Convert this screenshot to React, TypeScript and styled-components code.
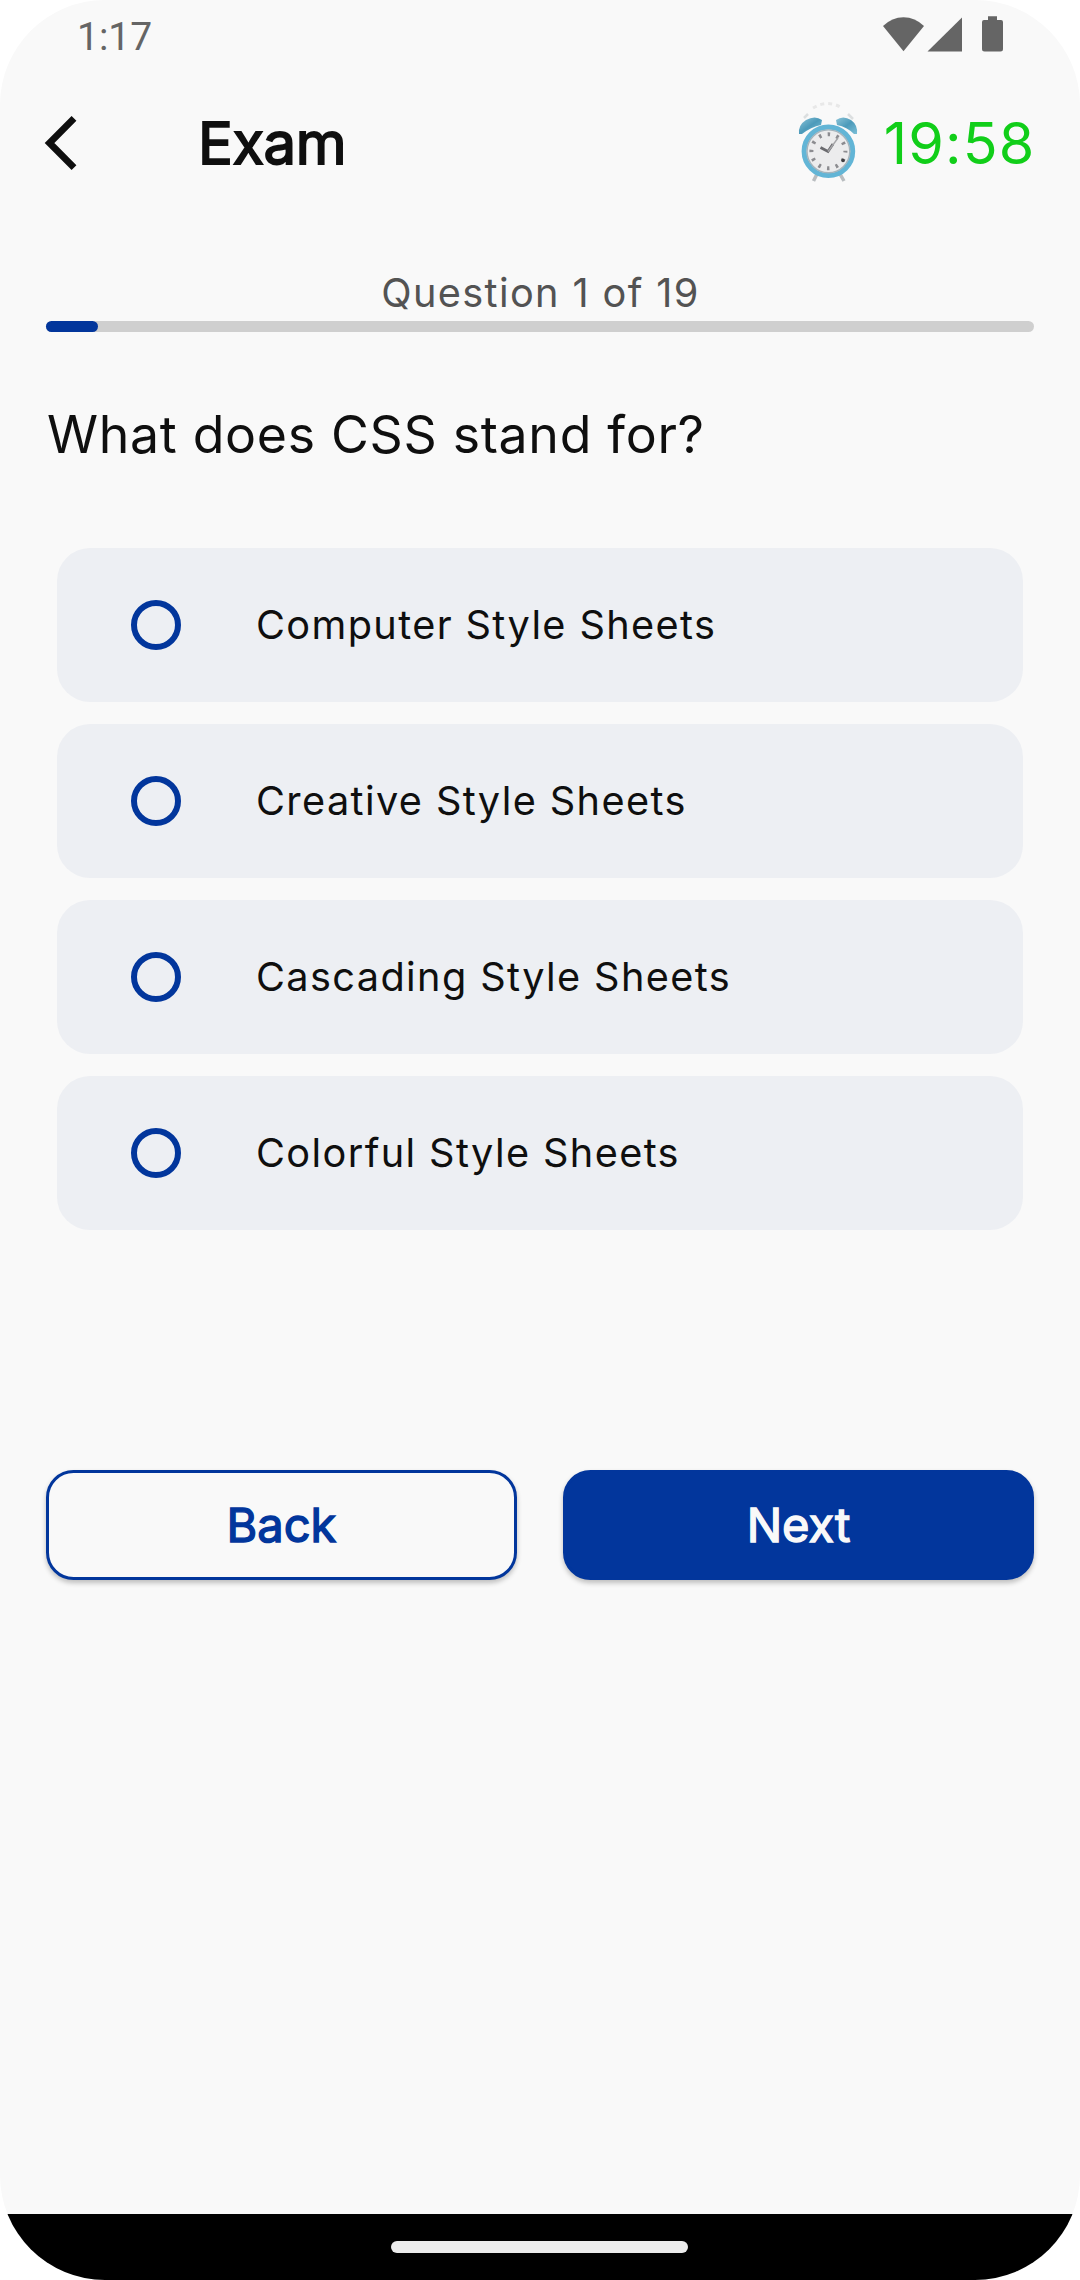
import React from 'react';
import styled, { createGlobalStyle } from 'styled-components';

const GlobalStyle = createGlobalStyle`
  * { box-sizing: border-box; }
  body { margin: 0; background: #ffffff; }
`;

const Screen = styled.div`
  display: flex;
  flex-direction: column;
  width: 1080px;
  height: 2280px;
  overflow: hidden;
  border-radius: 105px;
  background: #f9f9f9;
  color: #0f0f0f;
  font-family: Inter, Roboto, sans-serif;
`;

const StatusBar = styled.div`
  display: flex;
  align-items: center;
  justify-content: space-between;
  height: 66px;
  padding: 6px 77px 0;
  color: #656565;
`;

const Time = styled.span`
  margin-top: 3px;
  font: 400 39px/1 Roboto, sans-serif;
`;

const StatusIcons = styled.svg`
  width: 120px;
  height: 36px;
  margin-top: -4px;
  fill: currentColor;
`;

const AppBar = styled.header`
  display: flex;
  align-items: center;
  height: 154px;
  padding: 0 44.5px 0 43.5px;
`;

const BackIcon = styled.svg`
  width: 34px;
  height: 56px;
  fill: none;
  stroke: #0f0f0f;
  stroke-width: 6.8;
`;

const Title = styled.h1`
  flex: 1;
  margin: 0 0 0 120.5px;
  font-size: 58px;
  font-weight: 400;
  line-height: 1;
  letter-spacing: -0.45px;
  -webkit-text-stroke: 1.8px currentColor;
`;

const Timer = styled.div`
  display: flex;
  align-items: center;
  gap: 23px;
  color: #11ce19;
`;

const Remaining = styled.span`
  margin-top: 2px;
  font-size: 57.4px;
  line-height: 1;
  letter-spacing: 1.2px;
`;

const Clock = styled.svg`
  width: 66px;
  height: 88px;
  margin-top: 1px;
  filter: blur(0.6px);
`;

const Content = styled.main`
  display: flex;
  flex: 1;
  flex-direction: column;
  padding: 46px 46px 0;
`;

const Counter = styled.div`
  height: 55px;
  padding-left: 1px;
  text-align: center;
  color: #535353;
  font-size: 39.7px;
  line-height: 55px;
  letter-spacing: 1.375px;
`;

const Track = styled.div`
  height: 11px;
  border-radius: 6px;
  background: #cfcfcf;
`;

const Fill = styled.div`
  width: 52px;
  height: 11px;
  border-radius: 6px;
  background: #02369c;
`;

const Question = styled.h2`
  margin: 67px 0 79px;
  padding-left: 1px;
  height: 70px;
  font-size: 51.8px;
  font-weight: 400;
  line-height: 70px;
  letter-spacing: 0.69px;
`;

const Options = styled.div`
  display: flex;
  flex-direction: column;
  gap: 22px;
  padding: 0 11px;
`;

const Option = styled.label`
  display: flex;
  align-items: center;
  gap: 75px;
  height: 154px;
  padding-left: 74px;
  border-radius: 33px;
  background: #edeff3;
  font-size: 39.7px;
  line-height: 48px;
  letter-spacing: 1.375px;
`;

const Radio = styled.span`
  width: 50px;
  height: 50px;
  border: 6px solid #02369c;
  border-radius: 50%;
`;

const Actions = styled.div`
  display: grid;
  grid-template-columns: 1fr 1fr;
  gap: 46px;
  margin-top: 240px;
`;

const Button = styled.button<{ $filled?: boolean }>`
  height: 110px;
  padding: 0 0 2px;
  border: 3px solid #02369c;
  border-radius: 27.5px;
  background: ${(p) => (p.$filled ? '#02369c' : '#f9f9f9')};
  color: ${(p) => (p.$filled ? '#f9f9f9' : '#02369c')};
  box-shadow: 0 3px 5px rgba(0, 0, 0, 0.24);
  font: 400 47px/1 Inter, sans-serif;
  -webkit-text-stroke: 1.4px currentColor;
`;

const NavBar = styled.footer`
  display: flex;
  align-items: center;
  justify-content: center;
  height: 66px;
  padding-right: 1px;
  background: #000000;
`;

const Handle = styled.div`
  width: 297px;
  height: 12px;
  border-radius: 6px;
  background: #ececec;
`;

const answers = [
  'Computer Style Sheets',
  'Creative Style Sheets',
  'Cascading Style Sheets',
  'Colorful Style Sheets',
];

const AlarmClock = () => (
  <Clock viewBox="0 0 66 88">
    <defs>
      <linearGradient id="bell" x1="0" y1="0" x2="1" y2="1">
        <stop offset="0" stopColor="#8cc4d8" />
        <stop offset="0.5" stopColor="#4c9aba" />
        <stop offset="1" stopColor="#7cc0d8" />
      </linearGradient>
    </defs>
    <path d="M18 8 Q33 -1 47 8" fill="none" stroke="#e8e8e8" strokeWidth="3" strokeDasharray="4 4" />
    <path d="M9 18 L13 14 M53 14 L58 19" stroke="#dcdfe0" strokeWidth="2.5" />
    <path d="M22 74 L18.500 81 M45 74 L49 81" stroke="#b9bdc0" strokeWidth="3.5" />
    <path d="M4 34 Q3 25 11 20 Q20 15 27 20 L26 25 Q16 27 7 34 Z" fill="url(#bell)" />
    <path d="M62 34 Q63 25 56 20 Q48 15 41 20 L42 25 Q52 27 59 34 Z" fill="url(#bell)" />
    <circle cx="33.400" cy="51.300" r="24.300" fill="#ececed" stroke="#62b5d6" strokeWidth="5" />
    <circle cx="33.400" cy="51.300" r="21.400" fill="none" stroke="#a5b4bc" strokeWidth="1.400" />
    <circle
      cx="33.400"
      cy="51.300"
      r="17"
      fill="none"
      stroke="#8c8c90"
      strokeWidth="4"
      strokeDasharray="2.500 6.400"
      strokeDashoffset="1.250"
    />
    <path d="M25.500 47.500 L33 51.500 L38 44" fill="none" stroke="#6a6a6e" strokeWidth="2.800" />
    <path d="M33 51.500 L43 38" stroke="#a5a5a8" strokeWidth="1.400" />
    <circle cx="48" cy="60.500" r="1.800" fill="#3e3e42" />
  </Clock>
);

export default function App() {
  return (
    <>
      <GlobalStyle />
      <Screen>
        <StatusBar>
          <Time>1:17</Time>
          <StatusIcons viewBox="0 0 120 36">
            <path d="M0 10 Q9 1.200 20.500 1.200 Q32 1.200 41 10 L20.500 35.200 Z" />
            <path d="M44.500 35.500 L79 1.500 V35.500 Z" />
            <path d="M105 0.300 H114 V4 H118 Q120 4 120 6 V33 Q120 35.500 117.500 35.500 H101.500 Q99 35.500 99 33 V6 Q99 4 101 4 H105 Z" />
          </StatusIcons>
        </StatusBar>
        <AppBar>
          <BackIcon viewBox="0 0 34 56">
            <path d="M30 3.300 L5.500 28 L30 52.700" />
          </BackIcon>
          <Title>Exam</Title>
          <Timer>
            <AlarmClock />
            <Remaining>19:58</Remaining>
          </Timer>
        </AppBar>
        <Content>
          <Counter>Question 1 of 19</Counter>
          <Track>
            <Fill />
          </Track>
          <Question>What does CSS stand for?</Question>
          <Options>
            {answers.map((answer) => (
              <Option key={answer}>
                <Radio />
                {answer}
              </Option>
            ))}
          </Options>
          <Actions>
            <Button>Back</Button>
            <Button $filled>Next</Button>
          </Actions>
        </Content>
        <NavBar>
          <Handle />
        </NavBar>
      </Screen>
    </>
  );
}
